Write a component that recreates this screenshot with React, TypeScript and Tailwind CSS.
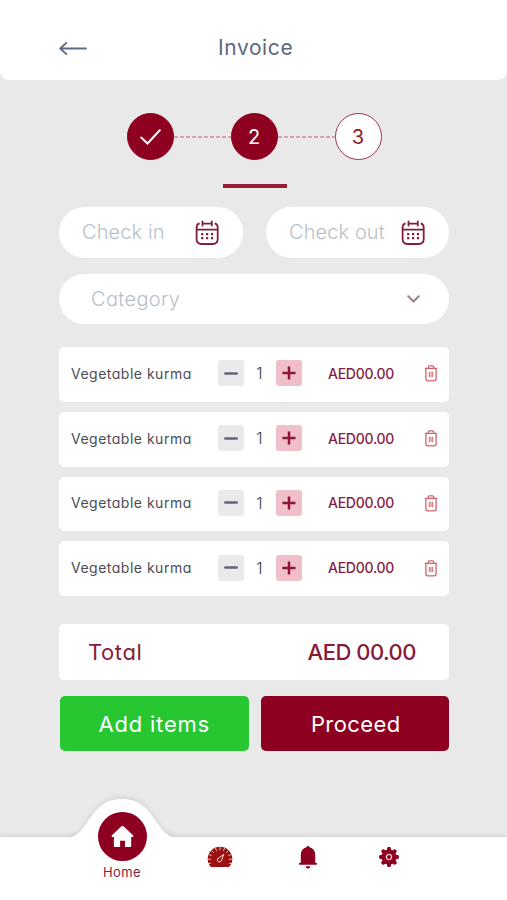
import type { ReactNode } from "react";

type InvoiceItem = {
  id: number;
  name: string;
  quantity: number;
  price: string;
};

const items: InvoiceItem[] = [
  { id: 1, name: "Vegetable kurma", quantity: 1, price: "AED00.00" },
  { id: 2, name: "Vegetable kurma", quantity: 1, price: "AED00.00" },
  { id: 3, name: "Vegetable kurma", quantity: 1, price: "AED00.00" },
  { id: 4, name: "Vegetable kurma", quantity: 1, price: "AED00.00" },
];

const CalendarIcon = () => (
  <svg width="24" height="26" viewBox="0 0 24 26" fill="none" stroke="#861c38" strokeWidth="1.8">
    <path d="M4.6 3.4C2.4 3.9 1.6 5.4 1.600 7.400v11.700c0 3.200 1.700 4.900 4.900 4.900h11.300c3.200 0 4.900-1.700 4.900-4.900V7.400c0-2-.8-3.500-3-4" />
    <path d="M7.500 3.600h9.300M1.600 9.600h21" />
    <path d="M7.500 1.300v4.200M16.800 1.300v4.200" strokeLinecap="round" />
    <path d="M6.100 14.200h2.200m2.700 0h2.200m2.700 0h2.200M6.100 18.200h2.200m2.700 0h2.200m2.700 0h2.200" strokeWidth="2.2" />
  </svg>
);

const TrashIcon = () => (
  <svg width="14" height="17" viewBox="0 0 14 17" fill="none" stroke="#d0646c" strokeWidth="1.3">
    <path d="M.8 3.300h12.400M4.300 3.200V2c0-.7.4-1.100 1.100-1.100h3.200c.7 0 1.100.4 1.100 1.100v1.200" />
    <path d="M1.900 3.500v10.300c0 1.300.8 2.100 2.100 2.100h6c1.300 0 2.100-.8 2.100-2.100V3.500" />
    <path d="M5.300 6.800v5.300M7 6.800v5.300M8.700 6.800v5.300" strokeWidth="1" />
  </svg>
);

const GaugeIcon = () => (
  <svg width="26" height="22" viewBox="0 0 26 22" fill="none">
    <path d="M3.300 20.600A12.300 12.300 0 1 1 22.700 20.600Q22.200 21 21.500 21h-17Q3.800 21 3.300 20.600Z" fill="#9b1111" />
    <path
      d="M.8 13.200H4M22 13.200h3.200M1.800 8.500l2.900 1.200M24.200 8.500l-2.900 1.200M4.500 4.600l2.200 2.200M21.500 4.600l-2.200 2.200M8.400 2l1.200 2.900M17.600 2l-1.200 2.900M13 1v3.200M1 17.500h3M22 17.500h3"
      stroke="#fff"
      strokeOpacity=".7"
      strokeWidth="1"
    />
    <path d="M16.800 8.400l-4.800 3.400a2.100 2.100 0 1 0 2.500 2.500Z" stroke="#f7dede" strokeWidth="1" />
  </svg>
);

const BellIcon = () => (
  <svg width="18" height="23" viewBox="0 0 18 23" fill="#8d0020">
    <path d="M9 0c.8 0 1.300.5 1.500 1.300C14.300 2.300 16.200 5 16.200 8.400v8.400h.8c.6 0 1 .4 1 1s-.4 1-1 1H1c-.6 0-1-.4-1-1s.4-1 1-1h.8V8.400C1.800 5 3.700 2.300 7.500 1.300 7.700.5 8.200 0 9 0Z" />
    <path d="M6.700 20.200h4.600c0 1.500-.9 2.400-2.300 2.400s-2.300-.9-2.300-2.400Z" />
  </svg>
);

const GearIcon = () => (
  <svg width="20" height="20" viewBox="-10 -10 20 20" fill="#8d0020">
    <circle r="7.4" />
    {[0, 45, 90, 135, 180, 225, 270, 315].map((angle) => (
      <path
        key={angle}
        d="M-2.400-6.500-1.700-9.200Q-1.500-9.900-.8-9.900H.8Q1.500-9.900 1.700-9.200L2.400-6.500Z"
        transform={`rotate(${angle})`}
      />
    ))}
    <circle r="2.600" stroke="#f8dbe1" strokeWidth="1.300" />
  </svg>
);

const Field = ({ label }: { label: string }) => (
  <div className="flex h-[51px] items-center justify-between rounded-full bg-white pr-6 pl-[23px]">
    <span className="-mt-0.5 text-[20px] font-light tracking-[0.1px] text-[#b9bfc8]">{label}</span>
    <CalendarIcon />
  </div>
);

const Step = ({ children, active = true }: { children: ReactNode; active?: boolean }) => (
  <div
    className={`flex size-[47px] items-center justify-center rounded-full border text-[20px] ${
      active ? "border-[#8d0020] bg-[#8d0020] text-white" : "border-[#9b3550] bg-white text-[#861c38]"
    }`}
  >
    {children}
  </div>
);

const StepLine = () => (
  <svg width="57" height="2" viewBox="0 0 57 2" className="mt-px">
    <path d="M0 1h57" stroke="#cf8798" strokeWidth="1.4" strokeDasharray="4 2" />
  </svg>
);

const ItemRow = ({ item }: { item: InvoiceItem }) => (
  <div className="flex h-[54.8px] items-center rounded-[5px] bg-white pr-[11px] pb-[2px] pl-3">
    <span className="w-[147px] text-[14px] tracking-[0.5px] whitespace-nowrap text-[#4b4d57]">{item.name}</span>
    <button type="button" aria-label="Decrease" className="flex size-[26px] items-center justify-center rounded-[3px] bg-[#e9eaeb]">
      <svg width="14" height="3" viewBox="0 0 14 3" stroke="#626675" strokeWidth="2.5" strokeLinecap="round">
        <path d="M1.3 1.5h11.4" />
      </svg>
    </button>
    <span className="w-8 pr-px text-center text-[16px] font-light text-[#3c3e48]">{item.quantity}</span>
    <button type="button" aria-label="Increase" className="flex size-[26px] items-center justify-center rounded-[3px] bg-[#f0bfca]">
      <svg width="14" height="14" viewBox="0 0 14 14" stroke="#8d1739" strokeWidth="2.5">
        <path d="M7 .5v13M.5 7h13" />
      </svg>
    </button>
    <span className="ml-[26px] text-[14px] font-medium tracking-[-0.25px] whitespace-nowrap text-[#861c45]">{item.price}</span>
    <button type="button" aria-label="Remove" className="ml-auto pt-px">
      <TrashIcon />
    </button>
  </div>
);

const BottomNav = () => (
  <nav className="relative h-[63px] bg-white shadow-[0_-1px_5px_rgba(0,0,0,0.12)]">
    {/* raised bump behind the active tab */}
    <div className="absolute -top-[54px] left-[62px] h-[54px] w-[120px] overflow-hidden">
      <svg
        className="mt-2"
        width="120"
        height="54"
        viewBox="0 0 120 54"
        style={{ filter: "drop-shadow(0 -2px 2px rgba(0,0,0,.08))" }}
      >
        <path d="M9 46C16 44 19 40 24 33C35 17 42 8 60 8S85 17 96 33C101 40 104 44 111 46V54H9Z" fill="#fff" />
      </svg>
    </div>
    <a href="#" className="absolute -top-[25px] left-[97px] flex w-[50px] flex-col items-center">
      <span className="flex size-[49px] items-center justify-center rounded-full bg-[#8d0020]">
        <svg width="23" height="23" viewBox="0 0 23 23" fill="#fff">
          <path d="M10.400 1.300Q11.500.3 12.600 1.300L22 10.300c.8.800.4 1.700-.6 1.700h-1.200v8.500c0 1-.5 1.500-1.500 1.500h-4.700v-6.200h-4.900V22H4.400c-1 0-1.500-.5-1.500-1.500V12H1.600C.6 12 .2 11.100 1 10.300Z" />
        </svg>
      </span>
      <span className="mt-0.5 text-[13px] leading-[18px] tracking-[0.4px] text-[#861c38]">Home</span>
    </a>
    <div className="flex items-start pt-[9px] pl-[207px]">
      <GaugeIcon />
      <span className="ml-[66px]">
        <BellIcon />
      </span>
      <span className="mt-px ml-[62px]">
        <GearIcon />
      </span>
    </div>
  </nav>
);

const App = () => {
  return (
    <div className="flex h-[900px] w-[507px] flex-col overflow-hidden bg-[#e9e9e9] font-['Inter',sans-serif] [font-feature-settings:'cv11']">
      <header className="flex h-20 items-center rounded-b-[9px] bg-white pt-[14px] pl-[59px]">
        <button type="button" aria-label="Back" className="mt-[3px]">
          <svg width="28" height="14" viewBox="0 0 28 14" fill="none" stroke="#5c6c84" strokeWidth="1.8" strokeLinecap="round" strokeLinejoin="round">
            <path d="M27 6.500H1.200M7.300.8 1.200 6.500l6.100 5.700" />
          </svg>
        </button>
        <h1 className="mt-px ml-[131px] text-[21px] tracking-[0.6px] text-[#5c6880]">Invoice</h1>
      </header>

      <main className="flex-1 pr-[58px] pl-[59px]">
        <div className="mt-[33px] flex items-center justify-center">
          <Step>
            <svg width="21" height="16" viewBox="0 0 21 16" fill="none" stroke="#fff" strokeWidth="2" strokeLinecap="round">
              <path d="M1.200 8.500 7.500 14.500 19.800 1.200" />
            </svg>
          </Step>
          <StepLine />
          <Step>2</Step>
          <StepLine />
          <Step active={false}>3</Step>
        </div>
        <div className="mt-6 ml-[164px] h-[3.5px] w-16 bg-[#971c34]" />

        <div className="mt-[19.5px] grid grid-cols-[184px_183px] justify-between">
          <Field label="Check in" />
          <Field label="Check out" />
        </div>
        <div className="mt-4 flex h-[50px] items-center justify-between rounded-full bg-white pr-[29px] pl-8">
          <span className="text-[20px] font-light tracking-[0.35px] text-[#b9bfc8]">Category</span>
          <svg width="13" height="8" viewBox="0 0 13 8" fill="none" stroke="#a38491" strokeWidth="2.2" strokeLinecap="round" strokeLinejoin="round">
            <path d="M1.300 1.300 6.500 6.500 11.700 1.300" />
          </svg>
        </div>

        <div className="mt-[23px] flex flex-col gap-[10px]">
          {items.map((item) => (
            <ItemRow key={item.id} item={item} />
          ))}
        </div>

        <div className="mt-[27.5px] flex h-[56px] items-center justify-between rounded-[5px] bg-white pt-0.5 pr-[33px] pl-[29px] text-[22px] text-[#861c38]">
          <span className="tracking-[0.6px]">Total</span>
          <span className="font-medium tracking-[-0.5px]">AED 00.00</span>
        </div>
        <div className="mt-4 grid grid-cols-[188.5px_188.5px] justify-end gap-3 text-[22px] text-white">
          <button type="button" className="h-[55.5px] rounded-[5px] bg-[#26c730] pt-0.5 tracking-[0.8px]">
            Add items
          </button>
          <button type="button" className="h-[55.5px] rounded-[5px] bg-[#8d0020] pt-0.5 pl-0.5 tracking-[0.4px]">
            Proceed
          </button>
        </div>
      </main>

      <BottomNav />
    </div>
  );
};

export default App;
